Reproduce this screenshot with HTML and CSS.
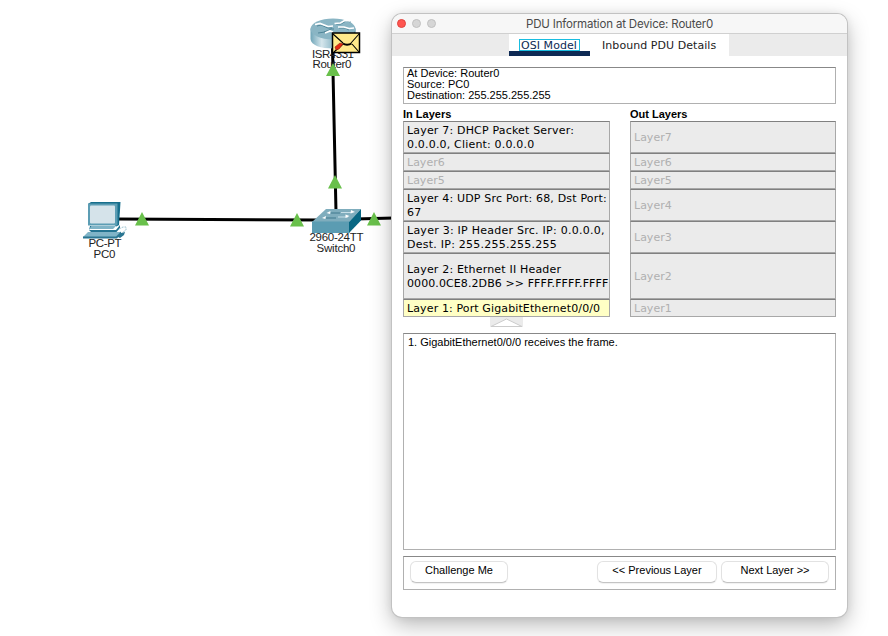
FILE: index.html
```html
<!DOCTYPE html>
<html lang="en">
<head>
<meta charset="utf-8">
<title>PDU Information</title>
<link rel="stylesheet" href="styles.css">
</head>
<body>
<svg class="topology" width="888" height="636" viewBox="0 0 888 636">
  <defs>
    <linearGradient id="body" x1="0" x2="1"><stop offset="0" stop-color="#6fa5b8"/><stop offset=".25" stop-color="#d5e6ec"/><stop offset=".6" stop-color="#75a9bb"/><stop offset="1" stop-color="#3b7c93"/></linearGradient>
  </defs>
  <g class="links">
    <path d="M332.500 48L336 212M116 219L320 220M355 219L394 218"/>
  </g>
  <g class="router">
    <path fill="url(#body)" d="M310.500 28.500V39C311 45.500 321 48.500 333 48.500S355 45.500 355.500 39V28.500Z"/>
    <ellipse cx="333" cy="29" rx="22.500" ry="10.500" fill="#8ab5c4"/>
    <path d="M317 26l4-1 7 3 4 0M336 24l5 0 5-3 5 1M318 33l7-1 6-3 3 0M339 28l6 0 4 2M324 32l3-1" fill="none" stroke="#40788d" stroke-width=".8"/>
    <path d="M315 24.500l5-1 8 3 5-.5M334.500 23.500l6-.5 4-2.500 6 .5M338 27l6 0 5 1.500 5-.5M325 33l5-2 3 1" fill="none" stroke="#fff" stroke-width="1.700"/>
  </g>
  <g class="pc">
    <path fill="#176e8c" d="M88 204l3-2h29.500l-1.500 23-2.500 1.500Z"/>
    <rect x="88" y="203.500" width="29.500" height="22" fill="#5c9db4"/>
    <rect x="90" y="205.500" width="25" height="18" rx="1" fill="#d5e3ea"/>
    <path fill="#257491" d="M92 226l-3 4h27l4-5v3l-3.500 4H91l-2-2 1-4Z"/>
    <path fill="#80b4c7" d="M92 226h24l-3 3H89ZM88 232h33l-5 5H83Z"/>
    <path fill="#2a7692" d="M83 236.500h33l5-5v2l-4 5H83ZM118 237l3-4 4-1-1 3-4 3Z"/>
    <path d="M119 229l4-2h3v3l-4 3" fill="none" stroke="#9dc3cf" stroke-dasharray="2 1"/>
  </g>
  <g class="switch">
    <path fill="#7fadbd" d="M312 222l14-13h35l-12 13Z"/>
    <path fill="#5b9cb2" d="M312 221.500h37.500V233H312Z"/>
    <path fill="#086783" d="M349 222l12-13v11.500L349 233Z"/>
    <path d="M331 213h9M325 218h11" fill="none" stroke="#40788d"/>
    <path d="M341 212.500h11M338 217h10" fill="none" stroke="#c7dfe7"/>
    <path d="M326.500 213l4-2-.5 3ZM355 212l-4-2-.5 3.500ZM322 218l4-2-.5 3ZM349.500 216l-4-1.500v3.500Z" fill="#fff"/>
  </g>
  <g class="labels">
    <text x="333" y="57.500" textLength="42">ISR4331</text>
    <text x="332" y="68" textLength="39">Router0</text>
    <text x="105" y="247" textLength="33">PC-PT</text>
    <text x="104.500" y="258" textLength="22">PC0</text>
    <text x="336.500" y="241" textLength="54">2960-24TT</text>
    <text x="336" y="252" textLength="39">Switch0</text>
  </g>
  <g class="status">
    <path d="M333 63l7 13h-14ZM335 175l7 13.500h-14ZM142 212l7 13.500h-14ZM297 213l7 13.500h-14ZM374 212l7 13.500h-14Z"/>
  </g>
  <g class="envelope">
    <rect x="332.500" y="33" width="27" height="19.500" fill="#ffe98a" stroke="#000" stroke-width="1.500"/>
    <path d="M333 34l10 9M359 34l-8 9M334 52l9-8M359 52l-7-8" fill="none" stroke="#000" stroke-width="1.100"/>
    <path d="M343 43.500c2 1.500 6 1.500 8.500 0" fill="none" stroke="#000" stroke-width="2"/>
    <path d="M335 47l5-4 3 1-4 5-3 1Z" fill="#e52a12" stroke="#8c2414" stroke-width=".6"/>
  </g>
</svg>
<main class="window">
  <header class="titlebar">
    <div class="lights"><i class="light close"></i><i class="light"></i><i class="light"></i></div>
    <span class="title">PDU Information at Device: Router0</span>
  </header>
  <nav class="tabs">
    <div class="tab active"><span class="focus">OSI Model</span></div>
    <div class="tab"><span class="tab-details">Inbound PDU Details</span></div>
  </nav>
  <div class="content">
    <section class="info panel">
      <div class="device">At Device: Router0</div>
      <div class="source">Source: PC0</div>
      <div class="destination">Destination: 255.255.255.255</div>
    </section>
    <div class="columns">
      <section class="column">
        <h2>In Layers</h2>
        <div class="layers">
          <div class="layer"><p>Layer 7: DHCP Packet Server:<br>0.0.0.0, Client: 0.0.0.0</p></div>
          <div class="layer off"><p>Layer6</p></div>
          <div class="layer off"><p>Layer5</p></div>
          <div class="layer"><p>Layer 4: UDP Src Port: 68, Dst Port:<br>67</p></div>
          <div class="layer network"><p>Layer 3: IP Header Src. IP: 0.0.0.0,<br>Dest. IP: 255.255.255.255</p></div>
          <div class="layer datalink"><p>Layer 2: Ethernet II Header<br><span class="frame">0000.0CE8.2DB6 &gt;&gt; FFFF.FFFF.FFFF</span></p></div>
          <div class="layer current"><p>Layer 1: Port GigabitEthernet0/0/0</p></div>
        </div>
        <svg class="arrow" width="33" height="10" viewBox="0 0 33 10"><rect width="33" height="10" fill="#ebebeb"/><path d="M1 9.500L16.500 2 32 9.500Z" fill="#fff" stroke="#ccc"/></svg>
      </section>
      <section class="column">
        <h2 class="out">Out Layers</h2>
        <div class="layers">
          <div class="layer off"><p>Layer7</p></div>
          <div class="layer off"><p>Layer6</p></div>
          <div class="layer off"><p>Layer5</p></div>
          <div class="layer off"><p>Layer4</p></div>
          <div class="layer off"><p>Layer3</p></div>
          <div class="layer off"><p>Layer2</p></div>
          <div class="layer off"><p>Layer1</p></div>
        </div>
      </section>
    </div>
    <section class="log panel"><span>1. GigabitEthernet0/0/0 receives the frame.</span></section>
    <footer class="actions panel">
      <button class="challenge">Challenge Me</button>
      <button class="previous">&lt;&lt; Previous Layer</button>
      <button class="next">Next Layer &gt;&gt;</button>
    </footer>
  </div>
</main>
</body>
</html>
```
FILE: styles.css
```css
* { box-sizing: border-box; }
body {
  margin: 0;
  width: 888px;
  height: 636px;
  overflow: hidden;
  position: relative;
  background: #fff;
  font: 11px/11px "Liberation Sans", Arial, sans-serif;
  color: #000;
}
.topology { position: absolute; left: 0; top: 0; }
.links { fill: none; stroke: #000; stroke-width: 3; }
.labels { font-size: 11.5px; text-anchor: middle; fill: #222; }
.status { fill: #69c04b; }

.window {
  position: absolute;
  left: 392px;
  top: 14px;
  width: 455px;
  height: 603px;
  border-radius: 10px;
  background: #fff;
  box-shadow: 0 0 0 1px #c2c2c2, 0 8px 22px rgba(0, 0, 0, .28), 0 0 10px rgba(0, 0, 0, .08);
}
.titlebar {
  position: relative;
  height: 20px;
  border-bottom: 1px solid #d0d0d0;
  border-radius: 10px 10px 0 0;
  background: #f7f7f7;
  display: flex;
  justify-content: center;
  align-items: center;
}
.lights { position: absolute; left: 5px; top: 5px; display: flex; gap: 6px; }
.light { width: 9px; height: 9px; border-radius: 50%; background: #d6d6d6; border: 1px solid #c1c1c1; }
.close { background: #ff5550; border-color: #e0443e; }
.title { font: 11.5px/18px Inter, sans-serif; letter-spacing: -.17px; color: #4a4a4a; white-space: nowrap; }

.tabs { height: 22px; background: #ebebeb; display: flex; padding-left: 117px; }
.tab {
  width: 139px;
  background: #fff;
  font: 11px/12px "DejaVu Sans", sans-serif;
  letter-spacing: .06px;
  color: #222;
  padding: 6px 0 0 12px;
  white-space: nowrap;
}
.tab.active { width: 81px; padding: 5px 10px 0; border-bottom: 5px solid #0e2a54; color: #0e2a54; }
.focus { display: block; width: 61px; height: 12px; line-height: 13px; outline: 1px solid #19bde0; outline-offset: -1px; padding-left: 2px; }

.content { padding: 11px 11px 0; display: flex; flex-direction: column; }
.panel { border: 1px solid #b0b0b0; border-top-color: #888; background: #fff; }
.info { height: 37px; padding: 0 3px; white-space: nowrap; }
.columns { display: flex; justify-content: space-between; height: 229px; }
.column { width: 207px; display: flex; flex-direction: column; }
.column + .column { width: 206px; }
h2 { margin: 0; height: 17px; font-size: 11px; line-height: 21px; font-weight: 700; white-space: nowrap; }
.layers { display: grid; grid-template-rows: 32px 18px 18px 32px 32px 46px 18px; }
.layer {
  border: 1px solid #a8a8a8;
  border-top-color: #808080;
  background: #ebebeb;
  padding: 2px 0 0 3px;
  display: flex;
  align-items: center;
  font: 11px/14px "DejaVu Sans", sans-serif;
  letter-spacing: .18px;
  white-space: nowrap;
}
.layer p { margin: 0; }
.network { letter-spacing: .25px; }
.frame { letter-spacing: .09px; }
.off { color: #b0b0b0; letter-spacing: 0; }
.current { background: #ffffc5; letter-spacing: .12px; }
.arrow { display: block; margin-left: 87px; }
.log { height: 217px; padding: 3px 4px; white-space: nowrap; }
.actions { height: 34px; margin-top: 6px; padding: 4px 6px; display: flex; }
button {
  height: 22px;
  padding: 0 0 3px;
  border: 1px solid #e2e2e2;
  border-bottom-color: #c4c4c4;
  border-radius: 6px;
  background: #fff;
  font: inherit;
  color: #000;
  white-space: nowrap;
  box-shadow: 0 1px 1px rgba(0, 0, 0, .06);
}
.challenge { width: 98px; margin-right: auto; }
.previous { width: 120px; margin-right: 4px; }
.next { width: 108px; }
```
